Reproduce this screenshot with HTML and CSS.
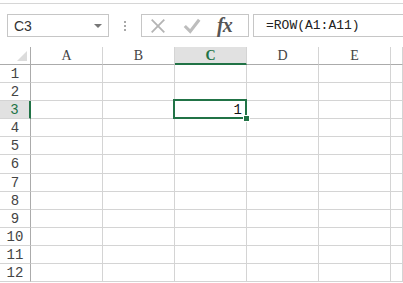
FILE: index.html
```html
<!DOCTYPE html>
<html lang="en">
<head>
    <meta charset="UTF-8">
    <title>Sheet</title>
    <link rel="stylesheet" href="styles.css">
</head>
<body>
    <div class="toolbar">
        <div class="namebox">
            <span>C3</span>
            <span class="arrow"></span>
        </div>
        <div class="grip"><i></i><i></i><i></i></div>
        <div class="buttons">
            <svg class="btn" width="20" height="20" viewBox="0 0 20 20">
                <path d="M3 3 L17 17 M17 3 L3 17" stroke="#b4b4b4" stroke-width="2" fill="none"/>
            </svg>
            <svg class="btn" width="20" height="20" viewBox="0 0 20 20">
                <path d="M2 10 L8 16 L18 3" stroke="#bdbdbd" stroke-width="3.5" fill="none"/>
            </svg>
            <span class="fx">fx</span>
        </div>
        <div class="formula">=ROW(A1:A11)</div>
    </div>

    <div class="sheet">
        <div class="corner"><span class="tri"></span></div>
        <div class="colhead">A</div>
        <div class="colhead">B</div>
        <div class="colhead active">C</div>
        <div class="colhead">D</div>
        <div class="colhead">E</div>
        <div class="colhead"></div>
    </div>

    <script>
        var sheet = document.querySelector(".sheet");
        for (var r = 1; r <= 12; r++) {
            var row = '<div class="rowhead' + (r === 3 ? ' active' : '') + '">' + r + '</div>';
            for (var c = 0; c < 6; c++) {
                if (r === 3 && c === 2) {
                    row += '<div class="cell sel">1<span class="handle"></span></div>';
                } else {
                    row += '<div class="cell"></div>';
                }
            }
            sheet.innerHTML += row;
        }
    </script>
</body>
</html>
```

FILE: styles.css
```css
body {
    margin: 0;
    background: #fff;
    font-family: "Liberation Mono", monospace;
    font-size: 13px;
    color: #333;
    overflow: hidden;
}
.toolbar {
    border-top: 1px solid #d6d6d6;
    margin-top: 3px;
    height: 44px;
    display: flex;
    align-items: flex-start;
    padding-top: 10px;
    box-sizing: border-box;
}
.namebox {
    margin-left: 7px;
    width: 102px;
    height: 23px;
    border: 1px solid #c6c6c6;
    box-sizing: border-box;
    display: flex;
    align-items: center;
    justify-content: space-between;
    padding: 0 6px 0 6px;
    font-family: "Liberation Sans", sans-serif;
    font-size: 14px;
    color: #333;
}
.arrow {
    width: 0;
    height: 0;
    border-left: 4px solid transparent;
    border-right: 4px solid transparent;
    border-top: 4px solid #777;
}
.grip {
    width: 32px;
    height: 23px;
    display: flex;
    flex-direction: column;
    align-items: center;
    justify-content: center;
    gap: 2px;
}
.grip i {
    width: 2px;
    height: 2px;
    background: #a8a8a8;
}
.buttons {
    width: 108px;
    height: 23px;
    border: 1px solid #c6c6c6;
    box-sizing: border-box;
    display: flex;
    align-items: center;
    padding-left: 7px;
    gap: 16px;
}
.btn {
    width: 18px;
    height: 18px;
}
.fx {
    font-family: "Liberation Serif", serif;
    font-style: italic;
    font-weight: bold;
    font-size: 20px;
    color: #555;
    letter-spacing: -1px;
}
.formula {
    margin-left: 4px;
    flex: 1;
    height: 23px;
    border: 1px solid #c6c6c6;
    border-right: none;
    box-sizing: border-box;
    padding-left: 12px;
    line-height: 21px;
    font-size: 13px;
    color: #222;
}
.sheet {
    display: grid;
    grid-template-columns: 31px repeat(5, 72px) 1fr;
    grid-template-rows: 18px;
    grid-auto-rows: 18.1px;
}
.corner {
    border-right: 1px solid #ababab;
    border-bottom: 1px solid #ababab;
    position: relative;
}
.tri {
    position: absolute;
    right: 3px;
    bottom: 3px;
    width: 0;
    height: 0;
    border-left: 10px solid transparent;
    border-bottom: 10px solid #dcdcdc;
}
.colhead {
    border-right: 1px solid #d4d4d4;
    border-bottom: 1px solid #ababab;
    text-align: center;
    line-height: 18px;
    color: #444;
    font-family: "Liberation Serif", serif;
    font-size: 14px;
}
.colhead.active {
    background: #e1e1e1;
    color: #217346;
    font-weight: bold;
    border-bottom: 2px solid #217346;
    line-height: 17px;
}
.rowhead {
    border-right: 1px solid #ababab;
    border-bottom: 1px solid #d4d4d4;
    text-align: center;
    line-height: 19px;
    color: #444;
    font-size: 14px;
}
.rowhead.active {
    background: #e1e1e1;
    color: #217346;
    border-right: 2px solid #217346;
}
.cell {
    border-right: 1px solid #d4d4d4;
    border-bottom: 1px solid #d4d4d4;
}
.cell.sel {
    position: relative;
    text-align: right;
    line-height: 19px;
    padding-right: 4px;
    font-size: 14px;
    color: #111;
}
.cell.sel::after {
    content: "";
    position: absolute;
    left: -2px;
    top: -2px;
    right: -1px;
    bottom: -1px;
    border: 2px solid #217346;
}
.handle {
    position: absolute;
    right: -4px;
    bottom: -4px;
    width: 5px;
    height: 5px;
    background: #217346;
    border: 1px solid #fff;
    z-index: 2;
}
```
